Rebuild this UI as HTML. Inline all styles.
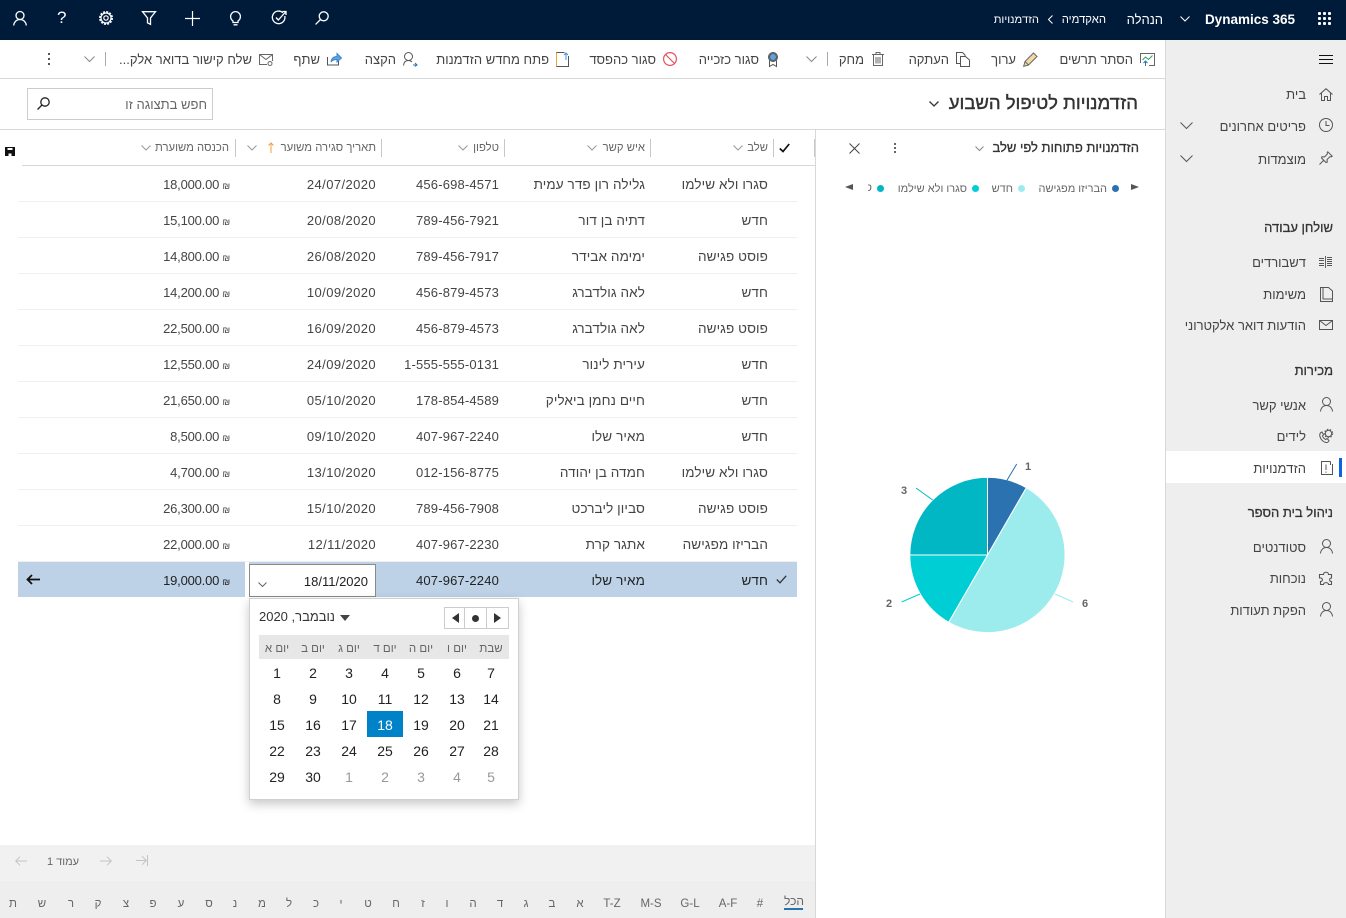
<!DOCTYPE html>
<html lang="he" dir="rtl">
<head>
<meta charset="utf-8">
<title>הזדמנויות</title>
<style>
html,body{margin:0;padding:0;width:1346px;height:918px;overflow:hidden;background:#fff}
body{position:relative;font-family:"Liberation Sans","DejaVu Sans",sans-serif;font-size:13px;color:#444}
.a{position:absolute}
.t{position:absolute;white-space:nowrap;line-height:16px;height:16px}
.l{direction:ltr}
.cx{transform:translateX(-50%)}
svg{position:absolute;overflow:visible;fill:none;stroke:currentColor;stroke-width:1}
.h{font-weight:normal;font-size:13px;color:#333;-webkit-text-stroke:.3px #333}
.r{position:absolute;left:18px;width:779px;height:36px;box-sizing:border-box;border-bottom:1px solid #f0f0f0;line-height:37px;color:#444}
.r span{position:absolute;white-space:nowrap;top:0}
.c1{right:29px;font-size:13.5px;letter-spacing:.1px}.c2{right:152px;font-size:13.5px;letter-spacing:.1px}.c3{right:298px;direction:ltr;letter-spacing:.17px}.c4{right:421px;direction:ltr;letter-spacing:.4px}.c5{right:567px;direction:ltr;letter-spacing:-.2px}
small{font-size:9px}
.cols{font-size:11.3px;color:#666}
.sep{position:absolute;width:1px;background:#c8c8c8}
.d{position:absolute;width:36px;height:26px;line-height:26px;text-align:center;color:#222;font-size:14px;direction:ltr}
.g{color:#999}
.w{position:absolute;top:641px;font-size:11.5px;line-height:16px;color:#666;white-space:nowrap;transform:translateX(-50%)}
.k{position:absolute;top:896px;font-size:11.5px;line-height:16px;color:#666;white-space:nowrap;transform:translateX(-50%)}
.nav{color:#444}
.side svg{color:#555}
</style>
</head>
<body>

<!-- top bar -->
<div class="a" style="left:0;top:0;width:1346px;height:40px;background:#001a3a"></div>
<div class="a" style="left:1317px;top:11px;width:15px;height:15px;background:radial-gradient(circle,#fff 1.5px,transparent 1.7px) 0 0/5px 5px"></div>
<div class="t l" style="right:51px;top:12px;color:#fff;font-weight:bold;font-size:13.5px">Dynamics 365</div>
<svg style="left:1180px;top:16px;color:#fff" width="10" height="6" viewBox="0 0 10 6"><path d="M.5.5 5 5 9.500.5"/></svg>
<div class="t" style="right:183px;top:12px;color:#fff;font-size:13px">הנהלה</div>
<div class="t" style="right:240px;top:12px;color:#fff;font-size:11.3px">האקדמיה</div>
<svg style="left:1048px;top:15px;color:#fff" width="5" height="9" viewBox="0 0 5 9"><path d="M4.500.5.500 4.500l4 4"/></svg>
<div class="t" style="right:307px;top:12px;color:#fff;font-size:11.2px">הזדמנויות</div>

<svg style="left:13px;top:11px;color:#fff;stroke-width:1.300" width="14" height="15" viewBox="0 0 14 15"><circle cx="7" cy="4.500" r="4"/><path d="M.7 14.500C1 11 3.500 8.500 7 8.500s6 2.500 6.300 6"/></svg>
<div class="t" style="left:57px;top:9px;color:#fff;font-size:17px;line-height:18px;direction:ltr">?</div>
<svg style="left:99px;top:11px;color:#fff;stroke-width:1.200" width="14" height="14" viewBox="0 0 14 14"><circle cx="7" cy="7" r="2.200"/><circle cx="7" cy="7" r="5"/><circle cx="7" cy="7" r="6.200" stroke-dasharray="2 1.250" stroke-width="1.600"/></svg>
<svg style="left:142px;top:11px;color:#fff;stroke-width:1.300" width="14" height="14" viewBox="0 0 14 14"><path d="M.5.700h13L8.500 7v6.300l-3-1.500V7z"/></svg>
<svg style="left:185px;top:11px;color:#fff;stroke-width:1.200" width="15" height="15" viewBox="0 0 15 15"><path d="M7.500 0v15M0 7.500h15"/></svg>
<svg style="left:230px;top:11px;color:#fff;stroke-width:1.300" width="11" height="15" viewBox="0 0 11 15"><path d="M3 10C1.500 9 .6 7.500.6 5.500a4.900 4.900 0 0 1 9.800 0c0 2-.9 3.500-2.400 4.500v1.500H3zM3.500 13.800h4"/></svg>
<svg style="left:272px;top:10px;color:#fff;stroke-width:1.300" width="15" height="15" viewBox="0 0 15 15"><path d="M11 2.800A6.300 6.300 0 1 0 12.800 6"/><path d="M4 7.500 6.300 10 14 1.500M10.500 1.500H14V5"/></svg>
<svg style="left:315px;top:11px;color:#fff;stroke-width:1.300" width="14" height="14" viewBox="0 0 14 14"><circle cx="8.700" cy="5.300" r="4.500"/><path d="M5.500 8.500.6 13.400"/></svg>

<!-- sidebar -->
<div class="a" style="left:1165px;top:40px;width:181px;height:878px;background:#eee;box-sizing:border-box;border-left:1px solid #d8d8d8"></div>
<div class="a" style="left:1166px;top:451px;width:180px;height:32px;background:#fff"></div>
<div class="a" style="left:1339px;top:458px;width:3px;height:19px;background:#0f62e6"></div>

<div class="side">
<svg style="left:1319px;top:55px;color:#111" width="14" height="9" viewBox="0 0 14 9"><path d="M0 .5h14M0 4.500h14M0 8.500h14"/></svg>
<svg style="left:1319px;top:88px" width="14" height="13" viewBox="0 0 14 13"><path d="M.5 6.500 7 .7l6.500 5.800M2.500 5v7.500h3V8.500h3v4h3V5"/></svg>
<svg style="left:1319px;top:118px" width="14" height="14" viewBox="0 0 14 14"><circle cx="7" cy="7" r="6.500"/><path d="M7 3v4.500H3.500" transform="matrix(-1 0 0 1 14 0)"/></svg>
<svg style="left:1319px;top:151px" width="14" height="14" viewBox="0 0 14 14"><path d="M.5 13.500 5 9M8.800.8l4.400 4.400-1 .6-1.200-.2L8 8.500 8.300 11 7 11.500 2.500 7 3 5.700l2.500.3L8.400 3 8.200 1.800z"/></svg>
<svg style="left:1319px;top:256px" width="13" height="12" viewBox="0 0 13 12"><path d="M0 2.500h5M0 4.500h5M8 1.500h5M8 3.500h5M8 5.500h5M0 7.500h5M0 9.500h5M8 7.500h5M8 9.500h5M6.500 0v12" stroke-width=".9"/></svg>
<svg style="left:1320px;top:287px" width="13" height="15" viewBox="0 0 13 15"><path d="M.5.500h8l4 3.500v10.500H.5zM3 .5v11.500h9.500"/></svg>
<svg style="left:1319px;top:320px" width="14" height="10" viewBox="0 0 14 10"><path d="M.5.500h13v9H.5zM.5.500 7 5.500l6.500-5"/></svg>
<svg style="left:1320px;top:397px" width="13" height="15" viewBox="0 0 13 15"><circle cx="6.500" cy="4.500" r="4"/><path d="M.5 14.500C.8 11 3 8.500 6.500 8.500s5.700 2.500 6 6"/></svg>
<svg style="left:1319px;top:429px" width="14" height="14" viewBox="0 0 14 14"><path d="M3 3C1.500 3.500.5 5 .8 7c.5 3 3.200 6 6.200 6.500 1.500.2 2.500-.5 3-2L8 9.500l-1.200 1C5.500 10 4 8.500 3.500 7l1-1.200z"/><circle cx="9.500" cy="4.500" r="3.200"/><circle cx="9.500" cy="4.500" r="4.200" stroke-dasharray="1.500 1.500"/></svg>
<svg style="left:1321px;top:461px" width="12" height="14" viewBox="0 0 12 14"><path d="M9.500.5H.5v13h11V3"/><path d="M5 3.500v5.500M5 10.500v1.200M9.500.5V4" stroke-width="1"/></svg>
<svg style="left:1320px;top:539px" width="13" height="15" viewBox="0 0 13 15"><circle cx="6.500" cy="4.500" r="4"/><path d="M.5 14.500C.8 11 3 8.500 6.500 8.500s5.700 2.500 6 6"/></svg>
<svg style="left:1319px;top:571px" width="14" height="14" viewBox="0 0 14 14"><path d="M4.500 3.500c0-3 5-3 5 0h3V7c-2.500 0-2.500 3.500 0 3.500v3H9.500c0-2.500-5-2.500-5 0h-3v-3c2.500 0 2.500-3.500 0-3.500H.5V3.500z" stroke-width="1.100"/></svg>
<svg style="left:1320px;top:602px" width="13" height="15" viewBox="0 0 13 15"><circle cx="6.500" cy="4.500" r="4"/><path d="M.5 14.500C.8 11 3 8.500 6.500 8.500s5.700 2.500 6 6"/></svg>
<svg style="left:1180px;top:122px" width="13" height="7" viewBox="0 0 13 7"><path d="M.5.500l6 6 6-6"/></svg>
<svg style="left:1180px;top:155px" width="13" height="7" viewBox="0 0 13 7"><path d="M.5.500l6 6 6-6"/></svg>
</div>

<div class="t nav" style="right:40px;top:87px">בית</div>
<div class="t nav" style="right:40px;top:119px">פריטים אחרונים</div>
<div class="t nav" style="right:40px;top:152px">מוצמדות</div>
<div class="t h" style="right:13px;top:220px">שולחן עבודה</div>
<div class="t nav" style="right:40px;top:255px">דשבורדים</div>
<div class="t nav" style="right:40px;top:287px">משימות</div>
<div class="t nav" style="right:40px;top:318px">הודעות דואר אלקטרוני</div>
<div class="t h" style="right:13px;top:363px">מכירות</div>
<div class="t nav" style="right:40px;top:398px">אנשי קשר</div>
<div class="t nav" style="right:40px;top:429px">לידים</div>
<div class="t nav" style="right:40px;top:461px">הזדמנויות</div>
<div class="t h" style="right:13px;top:505px">ניהול בית הספר</div>
<div class="t nav" style="right:40px;top:540px">סטודנטים</div>
<div class="t nav" style="right:40px;top:571px">נוכחות</div>
<div class="t nav" style="right:40px;top:603px">הפקת תעודות</div>

<!-- command bar -->
<div class="a" style="left:0;top:78px;width:1165px;height:1px;background:#d8d8d8"></div>
<div class="t" style="right:213px;top:52px">הסתר תרשים</div>
<div class="t" style="right:330px;top:52px">ערוך</div>
<div class="t" style="right:397px;top:52px">העתקה</div>
<div class="t" style="right:482px;top:52px">מחק</div>
<div class="t" style="right:587px;top:52px">סגור כזכייה</div>
<div class="t" style="right:690px;top:52px">סגור כהפסד</div>
<div class="t" style="right:797px;top:52px">פתח מחדש הזדמנות</div>
<div class="t" style="right:950px;top:52px">הקצה</div>
<div class="t" style="right:1026px;top:52px">שתף</div>
<div class="t" style="right:1094px;top:52px">שלח קישור בדואר אלק...</div>

<svg style="left:1140px;top:53px;color:#666" width="15" height="13" viewBox="0 0 15 13"><path d="M.5 10V.5h14V12.500H9"/><path d="M2.500 7l3-3 3 2.500 4-4" style="stroke:#2e9e5b"/><path d="M5.500 13V8M3.500 10l2-2 2 2" style="stroke:#2a72b0"/></svg>
<svg style="left:1023px;top:52px;color:#666" width="15" height="15" viewBox="0 0 15 15"><path d="M.7 14.300 2 9.500 10.500 1l3.500 3.500L5.500 13z" style="fill:#f3d9a4"/><path d="M2 9.500l3.500 3.500"/></svg>
<svg style="left:956px;top:52px;color:#555" width="14" height="15" viewBox="0 0 14 15"><path d="M4.500 11.500H.5V.5h6L9 3v1M4.500 4.500h5l4 3.500v6.500h-9z"/></svg>
<svg style="left:872px;top:52px;color:#666" width="12" height="14" viewBox="0 0 12 14"><path d="M0 2.500h12M4 2.500V.5h4v2M1.500 2.500v11h9v-11M4 5v6.500M6 5v6.500M8 5v6.500"/></svg>
<div class="sep" style="left:827px;top:52px;height:14px;background:#aaa"></div>
<svg style="left:806px;top:56px;color:#888" width="11" height="6" viewBox="0 0 11 6"><path d="M.5.500l5 5 5-5"/></svg>
<svg style="left:768px;top:52px;color:#555" width="10" height="15" viewBox="0 0 10 15"><circle cx="5" cy="5" r="3.500" style="fill:#5aa4e6"/><circle cx="5" cy="5" r="4.500"/><path d="M1.500 8.500v6L5 12.500l3.500 2v-6"/></svg>
<svg style="left:663px;top:52px;color:#e8505b;stroke-width:1.200" width="14" height="14" viewBox="0 0 14 14"><circle cx="7" cy="7" r="6.400"/><path d="M2.500 2.500l9 9"/></svg>
<svg style="left:556px;top:52px;color:#555" width="13" height="15" viewBox="0 0 13 15"><path d="M8.500.5h-8v14h12V4"/><path d="M.5.500v14" style="stroke:#e8a33c"/><path d="M10 1v7M8 3l2-2 2 2" style="stroke:#4a90d9"/></svg>
<svg style="left:403px;top:52px;color:#555" width="14" height="15" viewBox="0 0 14 15"><circle cx="5.500" cy="4.500" r="4"/><path d="M.5 13.500c.3-3 2-5 5-5 1.500 0 2.700.5 3.500 1.500"/><path d="M10 13h3.500M12 11l2 2-2 1.500" style="stroke:#2a72b0"/></svg>
<svg style="left:327px;top:52px;color:#555" width="15" height="14" viewBox="0 0 15 14"><path d="M.5 5v8h11V9"/><path d="M4 10c.5-4 3-5.500 6-5.500V1.500l4.500 4.500L10 10V7.500c-3 0-5 1-6 2.500z" style="fill:#5aa4e6;stroke:#3f87c9"/></svg>
<svg style="left:259px;top:54px;color:#666" width="14" height="12" viewBox="0 0 14 12"><path d="M8 10.500H.5V.5h13V7M.5.500 7 5.500l6.500-5"/><circle cx="11" cy="9.500" r="2"/></svg>
<div class="sep" style="left:105px;top:52px;height:14px;background:#aaa"></div>
<svg style="left:84px;top:56px;color:#888" width="11" height="6" viewBox="0 0 11 6"><path d="M.5.500l5 5 5-5"/></svg>
<div class="a" style="left:48px;top:53px;width:2px;height:2px;background:#555;box-shadow:0 5px 0 #555,0 10px 0 #555"></div>

<!-- view header -->
<div class="t" style="right:208px;top:91px;font-size:18.500px;line-height:24px;height:24px;color:#333;-webkit-text-stroke:.4px #333">הזדמנויות לטיפול השבוע</div>
<svg style="left:929px;top:101px;color:#333;stroke-width:1.300" width="10" height="6" viewBox="0 0 10 6"><path d="M.5.500 5 5 9.500.5"/></svg>
<div class="a" style="left:27px;top:88px;width:186px;height:32px;box-sizing:border-box;border:1px solid #ccc"></div>
<div class="t" style="right:1139px;top:97px;color:#666">חפש בתצוגה זו</div>
<svg style="left:37px;top:97px;color:#222;stroke-width:1.300" width="13" height="13" viewBox="0 0 13 13"><circle cx="8" cy="5" r="4.200"/><path d="M5 8 .5 12.500"/></svg>
<div class="a" style="left:0;top:129px;width:1165px;height:1px;background:#d8d8d8"></div>

<!-- chart panel -->
<div class="a" style="left:815px;top:130px;width:1px;height:788px;background:#d8d8d8"></div>
<div class="t h" style="right:207px;top:140px;font-size:13px">הזדמנויות פתוחות לפי שלב</div>
<svg style="left:975px;top:146px;color:#888" width="9" height="5" viewBox="0 0 9 5"><path d="M.5.500l4 4 4-4"/></svg>
<div class="a" style="left:894px;top:143px;width:2px;height:2px;background:#666;box-shadow:0 4px 0 #666,0 8px 0 #666"></div>
<svg style="left:849px;top:143px;color:#444" width="11" height="11" viewBox="0 0 11 11"><path d="M.5.500l10 10M10.500.500l-10 10"/></svg>

<div class="a" style="left:1131px;top:184px;width:0;height:0;border-left:8px solid #555;border-top:3.500px solid transparent;border-bottom:3.500px solid transparent"></div>
<div class="a" style="left:1112px;top:185px;width:7px;height:7px;border-radius:50%;background:#2a72b0"></div>
<div class="t" style="right:239px;top:181px;font-size:11px;color:#666">הבריזו מפגישה</div>
<div class="a" style="left:1018px;top:185px;width:7px;height:7px;border-radius:50%;background:#9deced"></div>
<div class="t" style="right:333px;top:181px;font-size:11px;color:#666">חדש</div>
<div class="a" style="left:972px;top:185px;width:7px;height:7px;border-radius:50%;background:#00ced5"></div>
<div class="t" style="right:379px;top:181px;font-size:11px;color:#666">סגרו ולא שילמו</div>
<div class="a" style="left:877px;top:185px;width:7px;height:7px;border-radius:50%;background:#00b7c3"></div>
<div class="a" style="left:868px;top:184px;width:4px;height:8px;overflow:hidden;font-size:11px;line-height:8px;color:#666">ס</div>
<div class="a" style="left:845px;top:184px;width:0;height:0;border-right:8px solid #555;border-top:3.500px solid transparent;border-bottom:3.500px solid transparent"></div>

<svg style="left:0;top:0;stroke:none" width="1346" height="918" viewBox="0 0 1346 918">
<g stroke="#fff" stroke-width="1">
<path d="M987.500 555V477.300A77.700 77.700 0 0 1 1026.350 487.710Z" fill="#2a72b0"/>
<path d="M987.500 555 1026.350 487.710A77.700 77.700 0 0 1 948.650 622.290Z" fill="#9deced"/>
<path d="M987.500 555 948.650 622.290A77.700 77.700 0 0 1 909.800 555Z" fill="#00ced5"/>
<path d="M987.500 555H909.800A77.700 77.700 0 0 1 987.500 477.300Z" fill="#00b7c3"/>
</g>
<path d="M1006.700 480.700 1016.700 464" stroke="#2a72b0" fill="none"/>
<path d="M932.700 500 916 488" stroke="#00b7c3" fill="none"/>
<path d="M920 594 901.700 602" stroke="#00ced5" fill="none"/>
<path d="M1055 594 1073 602" stroke="#9deced" fill="none"/>
</svg>
<div class="t l cx" style="left:1028px;top:459px;font-size:11px;font-weight:bold;color:#666">1</div>
<div class="t l cx" style="left:904px;top:483px;font-size:11px;font-weight:bold;color:#666">3</div>
<div class="t l cx" style="left:889px;top:596px;font-size:11px;font-weight:bold;color:#666">2</div>
<div class="t l cx" style="left:1085px;top:596px;font-size:11px;font-weight:bold;color:#666">6</div>

<!-- grid header -->
<svg style="left:779px;top:143px;color:#111;stroke-width:1.700" width="11" height="10" viewBox="0 0 11 10"><path d="M.8 5.500 4 8.500 10.200 1"/></svg>
<div class="sep" style="left:773px;top:139px;height:18px"></div>
<div class="sep" style="left:814px;top:139px;height:18px"></div>
<div class="t cols" style="right:578px;top:140px">שלב</div>
<svg style="left:733px;top:145px;color:#999" width="10" height="6" viewBox="0 0 10 6"><path d="M.5.500 5 5 9.500.500"/></svg>
<div class="sep" style="left:650px;top:139px;height:18px"></div>
<div class="t cols" style="right:701px;top:140px">איש קשר</div>
<svg style="left:587px;top:145px;color:#999" width="10" height="6" viewBox="0 0 10 6"><path d="M.5.500 5 5 9.500.500"/></svg>
<div class="sep" style="left:504px;top:139px;height:18px"></div>
<div class="t cols" style="right:847px;top:140px">טלפון</div>
<svg style="left:458px;top:145px;color:#999" width="10" height="6" viewBox="0 0 10 6"><path d="M.5.500 5 5 9.500.500"/></svg>
<div class="sep" style="left:381px;top:139px;height:18px"></div>
<div class="t cols" style="right:970px;top:140px">תאריך סגירה משוער</div>
<svg style="left:268px;top:142px;color:#e8a33c" width="6" height="11" viewBox="0 0 6 11"><path d="M3 11V1M.5 3.500 3 1l2.500 2.500"/></svg>
<svg style="left:247px;top:145px;color:#999" width="10" height="6" viewBox="0 0 10 6"><path d="M.5.500 5 5 9.500.500"/></svg>
<div class="sep" style="left:235px;top:139px;height:18px"></div>
<div class="t cols" style="right:1117px;top:140px">הכנסה משוערת</div>
<svg style="left:141px;top:145px;color:#999" width="10" height="6" viewBox="0 0 10 6"><path d="M.5.500 5 5 9.500.500"/></svg>
<svg style="left:5px;top:147px;stroke:none;fill:#111" width="10" height="9" viewBox="0 0 10 9"><path d="M0 0h10v9H0zM2.500 1v2h5V1zM3.500 6.500V9h3V6.500z" fill-rule="evenodd"/></svg>
<div class="a" style="left:22px;top:165px;width:793px;height:1px;background:#d8d8d8"></div>

<!-- rows -->
<div class="r" style="top:166px"><span class="c1">סגרו ולא שילמו</span><span class="c2">גלילה רון פדר עמית</span><span class="c3">456-698-4571</span><span class="c4">24/07/2020</span><span class="c5">18,000.00 <small>₪</small></span></div>
<div class="r" style="top:202px"><span class="c1">חדש</span><span class="c2">דתיה בן דור</span><span class="c3">789-456-7921</span><span class="c4">20/08/2020</span><span class="c5">15,100.00 <small>₪</small></span></div>
<div class="r" style="top:238px"><span class="c1">פוסט פגישה</span><span class="c2">ימימה אבידר</span><span class="c3">789-456-7917</span><span class="c4">26/08/2020</span><span class="c5">14,800.00 <small>₪</small></span></div>
<div class="r" style="top:274px"><span class="c1">חדש</span><span class="c2">לאה גולדברג</span><span class="c3">456-879-4573</span><span class="c4">10/09/2020</span><span class="c5">14,200.00 <small>₪</small></span></div>
<div class="r" style="top:310px"><span class="c1">פוסט פגישה</span><span class="c2">לאה גולדברג</span><span class="c3">456-879-4573</span><span class="c4">16/09/2020</span><span class="c5">22,500.00 <small>₪</small></span></div>
<div class="r" style="top:346px"><span class="c1">חדש</span><span class="c2">עירית לינור</span><span class="c3">1-555-555-0131</span><span class="c4">24/09/2020</span><span class="c5">12,550.00 <small>₪</small></span></div>
<div class="r" style="top:382px"><span class="c1">חדש</span><span class="c2">חיים נחמן ביאליק</span><span class="c3">178-854-4589</span><span class="c4">05/10/2020</span><span class="c5">21,650.00 <small>₪</small></span></div>
<div class="r" style="top:418px"><span class="c1">חדש</span><span class="c2">מאיר שלו</span><span class="c3">407-967-2240</span><span class="c4">09/10/2020</span><span class="c5">8,500.00 <small>₪</small></span></div>
<div class="r" style="top:454px"><span class="c1">סגרו ולא שילמו</span><span class="c2">חמדה בן יהודה</span><span class="c3">012-156-8775</span><span class="c4">13/10/2020</span><span class="c5">4,700.00 <small>₪</small></span></div>
<div class="r" style="top:490px"><span class="c1">פוסט פגישה</span><span class="c2">סביון ליברכט</span><span class="c3">789-456-7908</span><span class="c4">15/10/2020</span><span class="c5">26,300.00 <small>₪</small></span></div>
<div class="r" style="top:526px"><span class="c1">הבריזו מפגישה</span><span class="c2">אתגר קרת</span><span class="c3">407-967-2230</span><span class="c4">12/11/2020</span><span class="c5">22,000.00 <small>₪</small></span></div>

<!-- selected row -->
<div class="r" style="top:562px;height:35px;background:#bdd2e7;border:0;line-height:37px;color:#222"><span class="c1">חדש</span><span class="c2">מאיר שלו</span><span class="c3">407-967-2240</span><span class="c5">19,000.00 <small>₪</small></span></div>
<svg style="left:776px;top:575px;color:#333;stroke-width:1.300" width="11" height="9" viewBox="0 0 11 9"><path d="M.8 4.500 4 7.800 10.200.8"/></svg>
<svg style="left:26px;top:574px;color:#111;stroke-width:1.800" width="14" height="11" viewBox="0 0 14 11"><path d="M14 5.500H1.500M6 1 1.500 5.500 6 10"/></svg>
<div class="a" style="left:245px;top:562px;width:4px;height:35px;background:#fff"></div>
<div class="a" style="left:249px;top:564px;width:127px;height:33px;box-sizing:border-box;border:1px solid #8a8a8a;background:#fff"></div>
<div class="t l" style="right:978px;top:574px;color:#222">18/11/2020</div>
<svg style="left:258px;top:582px;color:#666" width="9" height="6" viewBox="0 0 9 6"><path d="M.5.500l4 4 4-4"/></svg>

<!-- calendar -->
<div class="a" style="left:249px;top:598px;width:270px;height:202px;box-sizing:border-box;background:#fff;border:1px solid #d0d0d0;box-shadow:0 4px 10px rgba(0,0,0,.22)"></div>
<div class="t" style="right:1011px;top:609px;font-size:13px;color:#333">נובמבר, 2020</div>
<div class="a" style="left:340px;top:615px;width:0;height:0;border-top:6px solid #444;border-left:5px solid transparent;border-right:5px solid transparent"></div>
<div class="a" style="left:444px;top:607px;width:65px;height:22px;box-sizing:border-box;border:1px solid #ccc"></div>
<div class="a" style="left:464px;top:607px;width:1px;height:22px;background:#ccc"></div>
<div class="a" style="left:486px;top:607px;width:1px;height:22px;background:#ccc"></div>
<div class="a" style="left:452px;top:613px;width:0;height:0;border-right:7px solid #333;border-top:5px solid transparent;border-bottom:5px solid transparent"></div>
<div class="a" style="left:472px;top:615px;width:7px;height:7px;border-radius:50%;background:#333"></div>
<div class="a" style="left:494px;top:613px;width:0;height:0;border-left:7px solid #333;border-top:5px solid transparent;border-bottom:5px solid transparent"></div>
<div class="a" style="left:259px;top:635px;width:250px;height:24px;background:#e7e7e7"></div>
<div class="w" style="left:277px">יום א</div>
<div class="w" style="left:313px">יום ב</div>
<div class="w" style="left:349px">יום ג</div>
<div class="w" style="left:385px">יום ד</div>
<div class="w" style="left:421px">יום ה</div>
<div class="w" style="left:457px">יום ו</div>
<div class="w" style="left:491px">שבת</div>

<div class="d" style="left:259px;top:660px">1</div><div class="d" style="left:295px;top:660px">2</div><div class="d" style="left:331px;top:660px">3</div><div class="d" style="left:367px;top:660px">4</div><div class="d" style="left:403px;top:660px">5</div><div class="d" style="left:439px;top:660px">6</div><div class="d" style="left:473px;top:660px">7</div>
<div class="d" style="left:259px;top:686px">8</div><div class="d" style="left:295px;top:686px">9</div><div class="d" style="left:331px;top:686px">10</div><div class="d" style="left:367px;top:686px">11</div><div class="d" style="left:403px;top:686px">12</div><div class="d" style="left:439px;top:686px">13</div><div class="d" style="left:473px;top:686px">14</div>
<div class="d" style="left:259px;top:712px">15</div><div class="d" style="left:295px;top:712px">16</div><div class="d" style="left:331px;top:712px">17</div><div class="d" style="left:367px;top:711px;background:#0082c8;color:#fff;line-height:28px">18</div><div class="d" style="left:403px;top:712px">19</div><div class="d" style="left:439px;top:712px">20</div><div class="d" style="left:473px;top:712px">21</div>
<div class="d" style="left:259px;top:738px">22</div><div class="d" style="left:295px;top:738px">23</div><div class="d" style="left:331px;top:738px">24</div><div class="d" style="left:367px;top:738px">25</div><div class="d" style="left:403px;top:738px">26</div><div class="d" style="left:439px;top:738px">27</div><div class="d" style="left:473px;top:738px">28</div>
<div class="d" style="left:259px;top:764px">29</div><div class="d" style="left:295px;top:764px">30</div><div class="d g" style="left:331px;top:764px">1</div><div class="d g" style="left:367px;top:764px">2</div><div class="d g" style="left:403px;top:764px">3</div><div class="d g" style="left:439px;top:764px">4</div><div class="d g" style="left:473px;top:764px">5</div>

<!-- footer -->
<div class="a" style="left:0;top:845px;width:815px;height:36px;background:#f1f1f1"></div>
<div class="a" style="left:0;top:881px;width:815px;height:37px;background:#eee"></div>
<svg style="left:15px;top:856px;color:#c4c4c4" width="12" height="10" viewBox="0 0 12 10"><path d="M12 5H.7M5 .7.700 5 5 9.300"/></svg>
<div class="t cx" style="left:63px;top:854px;font-size:11px;color:#666">עמוד 1</div>
<svg style="left:100px;top:856px;color:#c4c4c4" width="12" height="10" viewBox="0 0 12 10"><path d="M0 5h11.300M7 .7 11.300 5 7 9.300"/></svg>
<svg style="left:136px;top:855px;color:#c4c4c4" width="12" height="11" viewBox="0 0 12 11"><path d="M0 5.500h10M6 1.200l4.300 4.300L6 9.800M11.500 0v11"/></svg>

<div class="k" style="left:13px">ת</div><div class="k" style="left:42px">ש</div><div class="k" style="left:71px">ר</div><div class="k" style="left:98px">ק</div><div class="k" style="left:126px">צ</div><div class="k" style="left:153px">פ</div><div class="k" style="left:181px">ע</div><div class="k" style="left:209px">ס</div><div class="k" style="left:235px">נ</div><div class="k" style="left:262px">מ</div><div class="k" style="left:289px">ל</div><div class="k" style="left:316px">כ</div><div class="k" style="left:341px">י</div><div class="k" style="left:368px">ט</div><div class="k" style="left:396px">ח</div><div class="k" style="left:423px">ז</div><div class="k" style="left:447px">ו</div><div class="k" style="left:473px">ה</div><div class="k" style="left:500px">ד</div><div class="k" style="left:526px">ג</div><div class="k" style="left:552px">ב</div><div class="k" style="left:580px">א</div>
<div class="k l" style="left:612px">T-Z</div><div class="k l" style="left:651px">M-S</div><div class="k l" style="left:690px">G-L</div><div class="k l" style="left:728px">A-F</div><div class="k l" style="left:760px">#</div>
<div class="k" style="left:794px;top:893px;font-size:12px">הכל</div>
<div class="a" style="left:784px;top:908px;width:19px;height:2px;background:#2a72b0"></div>

</body>
</html>
